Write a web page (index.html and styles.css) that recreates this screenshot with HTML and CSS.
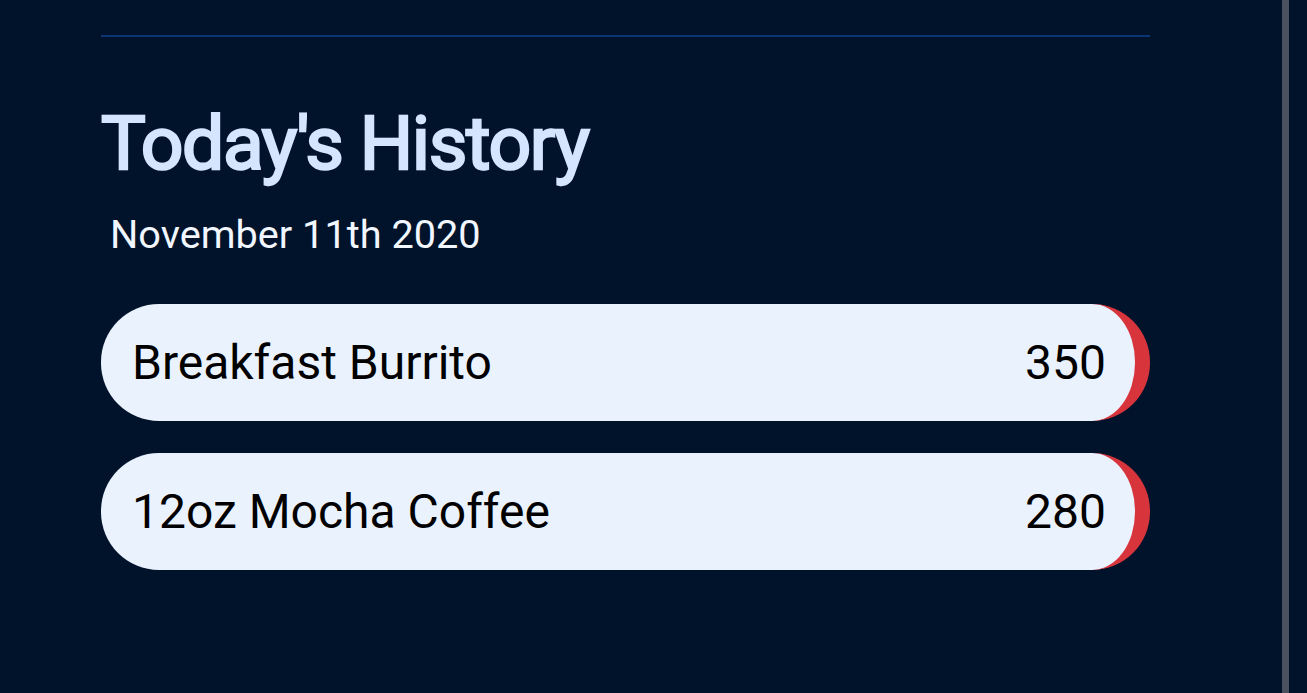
FILE: index.html
```html
<!DOCTYPE html>
<html>
<head>
<meta charset="utf-8">
<link rel="stylesheet" href="styles.css">
</head>
<body>
<div class="page">
  <main class="content">
    <hr class="divider">
    <h1 class="title">Today's History</h1>
    <p class="date">November 11th 2020</p>
    <ul class="list">
      <li class="item"><span class="name">Breakfast Burrito</span><span class="cal">350</span></li>
      <li class="item"><span class="name">12oz Mocha Coffee</span><span class="cal">280</span></li>
    </ul>
  </main>
  <div class="scrollbar"></div>
</div>
</body>
</html>
```
FILE: styles.css
```css
html, body {
  margin: 0;
  padding: 0;
  height: 100%;
  background: #00132b;
  font-family: Roboto, "Liberation Sans", sans-serif;
}
.page {
  display: flex;
  height: 693px;
  overflow: hidden;
}
.content {
  width: 1049px;
  margin-left: 101px;
  padding-top: 35px;
}
.divider {
  border: 0;
  height: 2px;
  background: #0b3574;
  margin: 0;
}
.title {
  margin: 61px 0 0;
  font-size: 75px;
  font-weight: 400;
  line-height: 90px;
  color: #d5e5ff;
  letter-spacing: -1.4px;
  -webkit-text-stroke: 2.4px #d5e5ff;
}
.date {
  margin: 24px 0 0 9px;
  font-size: 39.7px;
  line-height: 46px;
  color: #f1f6ff;
}
.list {
  list-style: none;
  margin: 46px 0 0;
  padding: 0;
  display: flex;
  flex-direction: column;
  gap: 32px;
}
.item {
  height: 117px;
  box-sizing: border-box;
  display: flex;
  align-items: center;
  justify-content: space-between;
  background: #eaf2fe;
  border-radius: 58px;
  border-right: 15px solid #d7343c;
  padding: 0 29px 0 31px;
  font-size: 48px;
  color: #000;
}
.scrollbar {
  width: 7px;
  background: #4a5260;
  margin-left: 132px;
  height: 100%;
}
```
